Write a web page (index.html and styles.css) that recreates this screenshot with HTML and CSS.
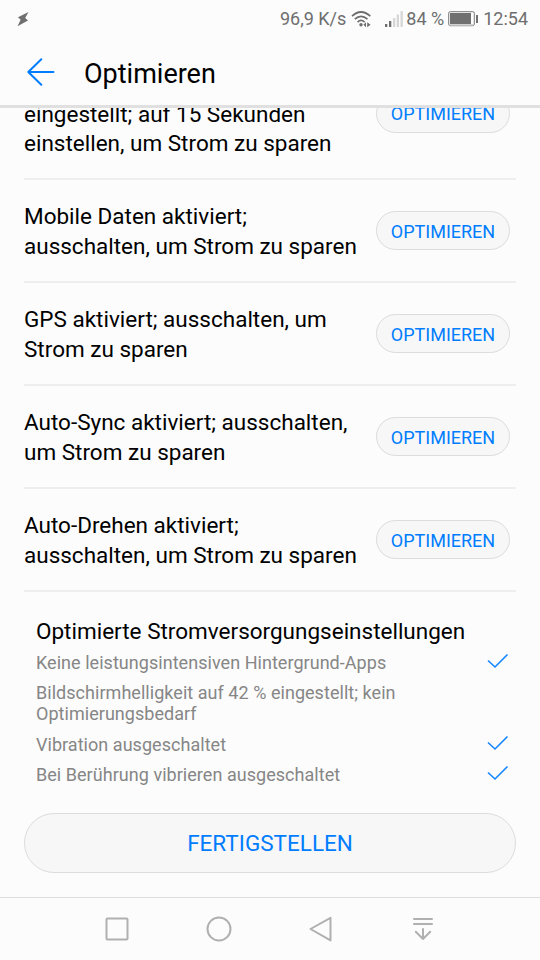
FILE: index.html
```
<!DOCTYPE html>
<html lang="de">
<head>
  <meta charset="UTF-8">
  <meta name="viewport" content="width=device-width, initial-scale=1.0">
  <title>Optimieren</title>
  <link rel="stylesheet" href="styles.css">
</head>
<body>
  <div class="status-bar">
    <svg class="bolt" width="12" height="16" viewBox="0 0 12 16"><path d="M11.5 1 1 6.2l2.6 2.6L.5 15.2 11 9.6 8.2 7z" fill="#707070"/></svg>
    <span class="speed">96,9 K/s</span>
    <svg class="wifi" width="21" height="18" viewBox="0 0 21 18">
      <g fill="none" stroke="#6e6e6e" stroke-width="1.7">
        <path d="M1 6.2Q10 -2.2 19.3 6.2"/>
        <path d="M3.8 9.2Q10 3.4 16.5 9.2"/>
        <path d="M6.6 12.1Q10 8.8 13.6 12.1"/>
      </g>
      <circle cx="10" cy="14.8" r="1.7" fill="#6e6e6e"/>
      <path d="M12.4 14.7 15 12.2v5zM19.6 14.7 16.2 12.2v5z" fill="#6e6e6e"/>
    </svg>
    <svg class="signal" width="18" height="18" viewBox="0 0 18 18">
      <path d="M0 14h2.3v3H0zM4 11h2.3v6H4z" fill="#6e6e6e"/>
      <path d="M8 8h2.3v9H8zM11.7 4.5H14V17h-2.3zM15.5 1h2.3v16h-2.3z" fill="#d6d6d6"/>
    </svg>
    <span class="percent">84 %</span>
    <svg class="battery" width="31" height="16" viewBox="0 0 31 16">
      <rect x=".7" y=".7" width="25.6" height="14" rx="1.5" fill="#fcfcfc" stroke="#777" stroke-width="1"/>
      <path d="M1.5 14h24" stroke="#c4c4c4" stroke-width="1.6"/>
      <rect x="2" y="2" width="21" height="11" fill="#707070"/>
      <path d="M28 4h2v8h-2z" fill="#707070"/>
    </svg>
    <span class="clock">12:54</span>
  </div>

  <header class="header">
    <svg width="28" height="28" viewBox="0 0 28 28" fill="none" stroke="#007dff" stroke-width="2" stroke-linecap="round" stroke-linejoin="round"><path d="M14.3 1.3 1.3 14l13 12.7M1.3 14H26.5"/></svg>
    <h1>Optimieren</h1>
  </header>

  <main class="content">
    <div class="row row-cut">
      <p>eingestellt; auf 15 Sekunden<br>einstellen, um Strom zu sparen</p>
      <button class="optimize">OPTIMIEREN</button>
    </div>
    <div class="row">
      <p>Mobile Daten aktiviert;<br>ausschalten, um Strom zu sparen</p>
      <button class="optimize">OPTIMIEREN</button>
    </div>
    <div class="row">
      <p>GPS aktiviert; ausschalten, um<br>Strom zu sparen</p>
      <button class="optimize">OPTIMIEREN</button>
    </div>
    <div class="row">
      <p>Auto-Sync aktiviert; ausschalten,<br>um Strom zu sparen</p>
      <button class="optimize">OPTIMIEREN</button>
    </div>
    <div class="row">
      <p>Auto-Drehen aktiviert;<br>ausschalten, um Strom zu sparen</p>
      <button class="optimize">OPTIMIEREN</button>
    </div>

    <section class="done">
      <h2>Optimierte Stromversorgungseinstellungen</h2>
      <ul>
        <li>
          <span>Keine leistungsintensiven Hintergrund-Apps</span>
          <svg class="check" width="22" height="16" viewBox="0 0 22 16"><path d="M1 7.5 8 14 20.5 1.5"/></svg>
        </li>
        <li>
          <span>Bildschirmhelligkeit auf 42 % eingestellt; kein<br>Optimierungsbedarf</span>
        </li>
        <li>
          <span>Vibration ausgeschaltet</span>
          <svg class="check" width="22" height="16" viewBox="0 0 22 16"><path d="M1 7.5 8 14 20.5 1.5"/></svg>
        </li>
        <li>
          <span>Bei Berührung vibrieren ausgeschaltet</span>
          <svg class="check" width="22" height="16" viewBox="0 0 22 16"><path d="M1 7.5 8 14 20.5 1.5"/></svg>
        </li>
      </ul>
    </section>

    <button class="finish">FERTIGSTELLEN</button>
  </main>

  <nav class="nav-bar">
    <svg width="26" height="26" viewBox="0 0 26 26"><rect x="2.5" y="2.5" width="21" height="21" rx="1"/></svg>
    <svg width="26" height="26" viewBox="0 0 26 26"><circle cx="13" cy="13" r="11.5"/></svg>
    <svg width="26" height="26" viewBox="0 0 26 26"><path d="M22.5 1.8v22.6L2.5 13z"/></svg>
    <svg width="26" height="26" viewBox="0 0 26 26"><path d="M4 3h18M4 8h18M13 13v10M5.8 15.8 13 23l7.2-7.2"/></svg>
  </nav>
</body>
</html>
```
FILE: styles.css
```
* {
  box-sizing: border-box;
}

body {
  margin: 0;
  height: 960px;
  display: flex;
  flex-direction: column;
  overflow: hidden;
  background-color: #fcfcfc;
  color: #000;
  font-family: Roboto, sans-serif;
}

h1, h2, p, ul {
  margin: 0;
  padding: 0;
  font-weight: normal;
}

button {
  padding: 0;
  font-family: inherit;
  color: #007dff;
  background-color: #f7f7f7;
  border: 1px solid #dcdcdc;
}

.status-bar {
  height: 37px;
  display: flex;
  align-items: center;
  padding: 0 12px 0 17px;
  font-size: 18px;
  color: #6e6e6e;
  white-space: nowrap;
}

.speed {
  margin-left: auto;
}

.wifi {
  margin-left: 5px;
}

.signal {
  margin-left: 13px;
}

.percent {
  margin-left: 3px;
}

.battery {
  margin-left: 4px;
}

.clock {
  margin-left: 4px;
}

.header {
  height: 71px;
  display: flex;
  align-items: center;
  gap: 29px;
  padding: 2px 0 0 27px;
  border-bottom: 3px solid #e0e0e0;
}

.header h1 {
  padding-top: 4px;
  font-size: 27px;
  line-height: 32px;
}

.content {
  flex: 1;
  min-height: 0;
  overflow: hidden;
  padding: 0 24px;
}

.row {
  height: 103px;
  display: flex;
  align-items: center;
  justify-content: space-between;
  padding-right: 6px;
  border-bottom: 2px solid #eee;
}

.row p {
  padding-top: 2px;
  font-size: 22.5px;
  line-height: 29.3px;
  white-space: nowrap;
}

/* first row is scrolled partly under the header */
.row-cut {
  height: 86px;
  margin-top: -14px;
  align-items: flex-start;
}

.row-cut p {
  padding-top: 6px;
}

.optimize {
  width: 134px;
  height: 39px;
  padding-top: 1px;
  border-radius: 20px;
  font-size: 18px;
}

.row-cut .optimize {
  padding-top: 0;
}

.done {
  padding: 25px 7px 0 12px;
}

.done h2 {
  font-size: 22.5px;
  line-height: 28px;
  white-space: nowrap;
}

.done ul {
  list-style: none;
  padding-top: 7px;
  display: flex;
  flex-direction: column;
  gap: 9.4px;
}

.done li {
  display: flex;
  justify-content: space-between;
  font-size: 18px;
  line-height: 21px;
  letter-spacing: 0.04px;
  color: #868686;
}

.check {
  margin-top: 1px;
  fill: none;
  stroke: #1584ff;
  stroke-width: 1.6;
}

.finish {
  display: block;
  width: 100%;
  height: 60px;
  margin-top: 27.8px;
  padding-top: 1px;
  border-radius: 30px;
  font-size: 22.5px;
}

.nav-bar {
  height: 63px;
  display: flex;
  justify-content: center;
  align-items: center;
  gap: 76px;
  border-top: 1px solid #ddd;
}

.nav-bar svg {
  margin-top: -1px;
  fill: none;
  stroke: #b0b0b0;
  stroke-width: 2;
  stroke-linejoin: round;
  stroke-linecap: round;
}
```
